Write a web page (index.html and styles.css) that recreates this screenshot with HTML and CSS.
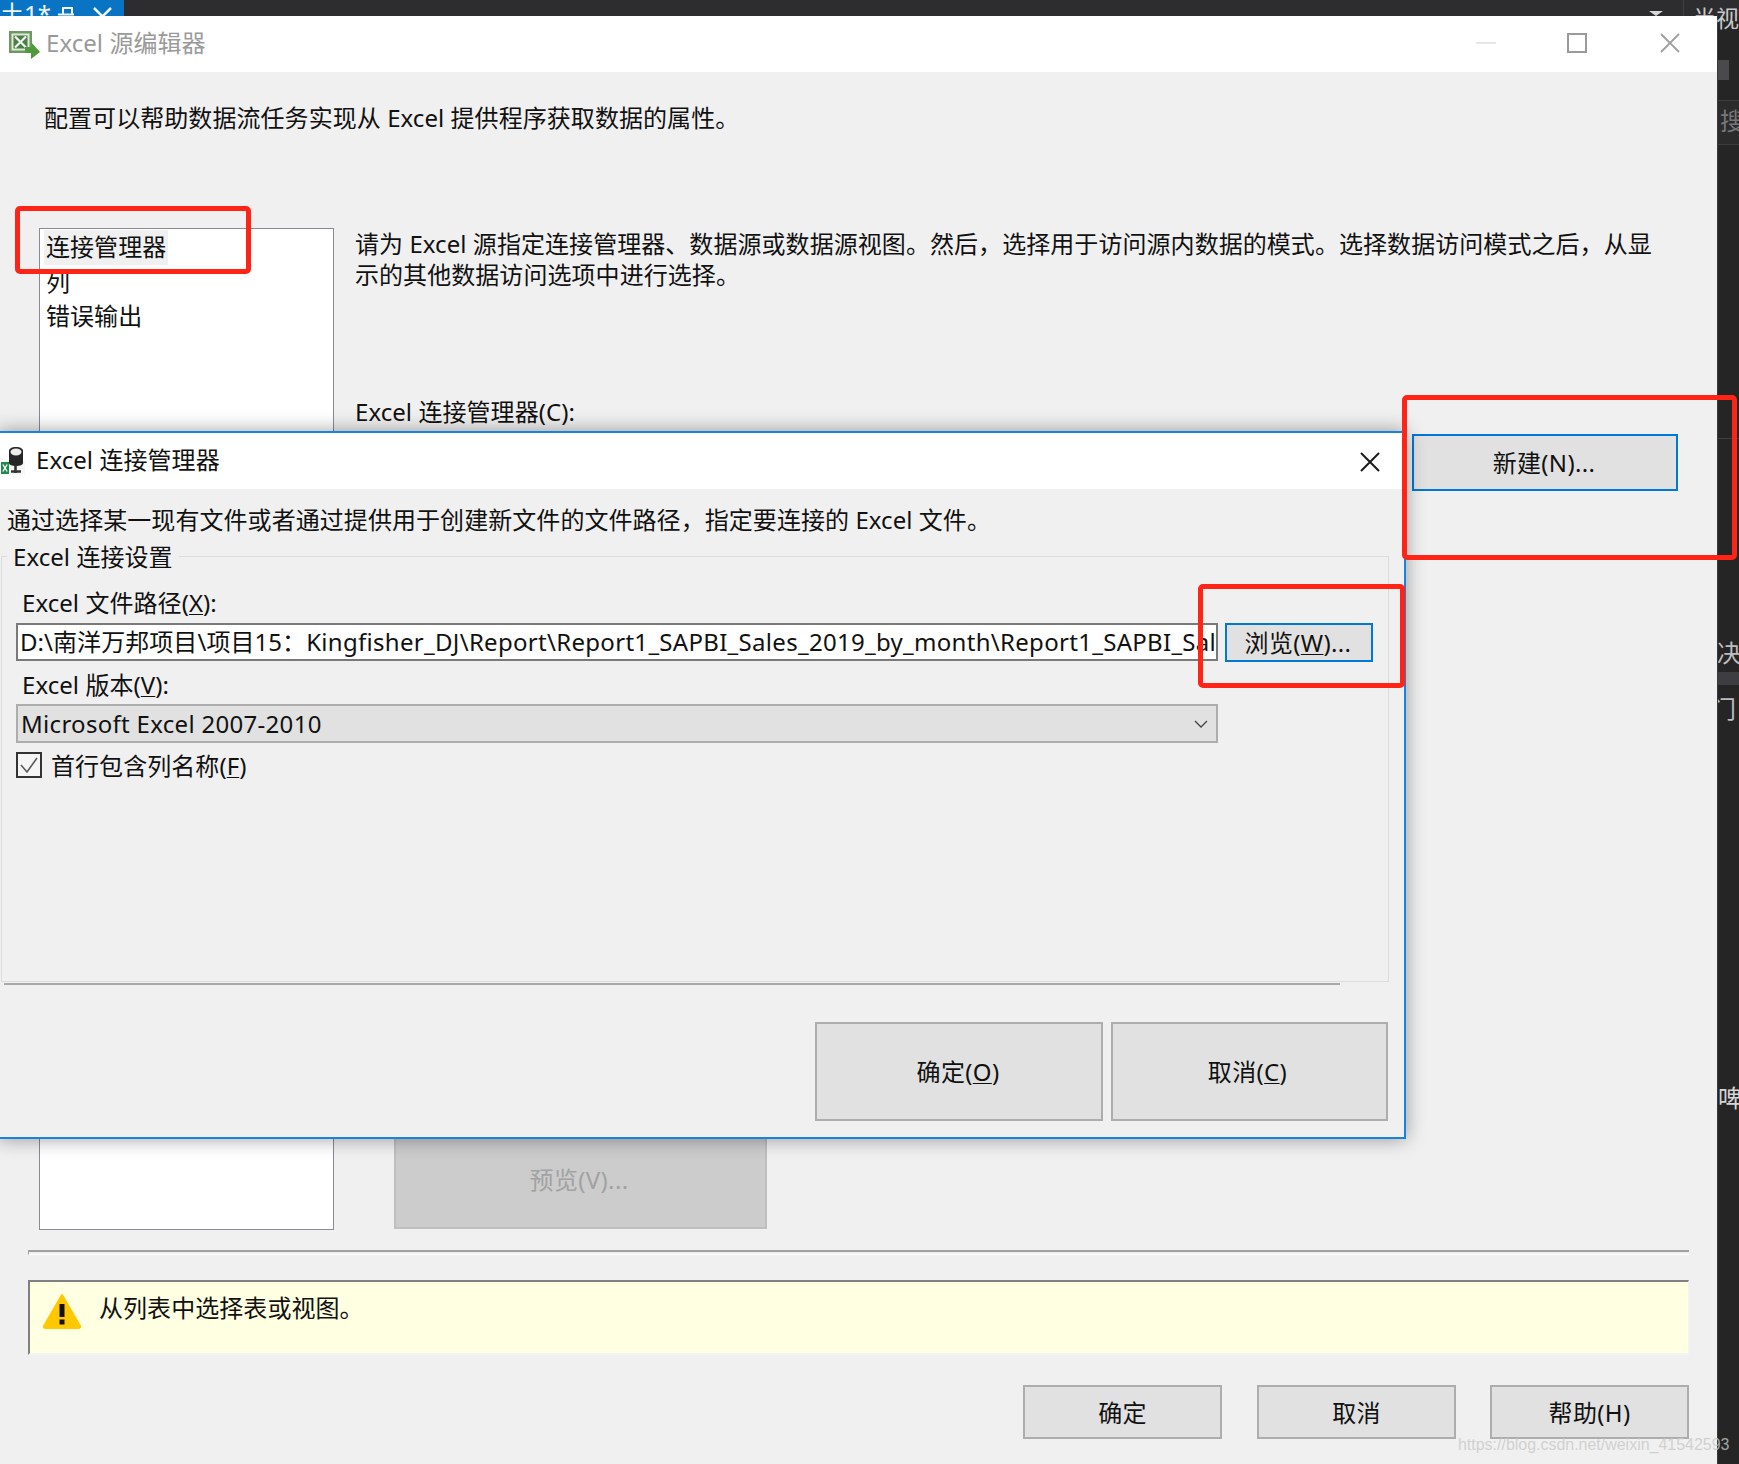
FILE: index.html
```html
<!DOCTYPE html>
<html lang="zh-CN">
<head>
<meta charset="utf-8">
<title>Excel 源编辑器</title>
<link rel="stylesheet" href="styles.css">
</head>
<body>
<div class="desktop">
  <header class="topbar">
    <div class="doc-tab">
      <span class="tab-name">土1*</span>
      <svg class="tab-pin" viewBox="0 0 16 9" aria-hidden="true"><path d="M0 7.500h16M5 7V1h9v6" stroke="#eef5fb" stroke-width="2" fill="none"/></svg>
      <svg class="tab-x" viewBox="0 0 19 19" aria-hidden="true"><path d="M1 1l17 17M18 1L1 18" stroke="#eef5fb" stroke-width="2.500" fill="none"/></svg>
    </div>
    <div class="top-tools"><span class="top-arrow"></span><span class="top-view">半视</span></div>
  </header>
  <div class="workspace">
    <main class="window">
      <div class="titlebar">
        <svg class="title-icon" viewBox="0 0 31 28" aria-hidden="true">
          <rect x="0" y="0" width="23" height="22" fill="#6d9a62"/>
          <rect x="2.500" y="2.500" width="18" height="17" fill="#dfe9d9"/>
          <rect x="4.500" y="4.500" width="14" height="13" fill="#4b7f45"/>
          <path d="M6 5.500l11 11M17 5.500L6 16.500" stroke="#f1f6ee" stroke-width="2.200" fill="none"/>
          <path d="M16 16h6v-5l9 10-9 7v-6h-6z" fill="#509a3d"/>
        </svg>
        <span class="title-text">Excel 源编辑器</span>
        <div class="win-controls">
          <svg class="wc" viewBox="0 0 20 20"><path d="M0 10h20" stroke="#dedede" stroke-width="1.5"/></svg>
          <svg class="wc" viewBox="0 0 20 20"><rect x="1" y="1" width="18" height="18" fill="none" stroke="#9a9a9a" stroke-width="2"/></svg>
          <svg class="wc wc-close" viewBox="0 0 20 20"><path d="M1 1l18 18M19 1L1 19" stroke="#a0a0a0" stroke-width="1.8" fill="none"/></svg>
        </div>
      </div>
      <div class="win-body">
        <p class="intro">配置可以帮助数据流任务实现从 Excel 提供程序获取数据的属性。</p>
        <div class="content">
          <ul class="nav-list">
            <li class="nav-item selected">连接管理器</li>
            <li class="nav-item">列</li>
            <li class="nav-item">错误输出</li>
          </ul>
          <section class="detail">
            <p class="instruction">请为 Excel 源指定连接管理器、数据源或数据源视图。然后，选择用于访问源内数据的模式。选择数据访问模式之后，从显<br>示的其他数据访问选项中进行选择。</p>
            <p class="conn-label">Excel 连接管理器(C):</p>
            <div class="new-row"><button class="btn btn-focus btn-new">新建(N)...</button></div>
            <button class="btn btn-disabled btn-preview">预览(V)...</button>
          </section>
        </div>
        <div class="separator"></div>
        <div class="message">
          <svg class="warn-icon" viewBox="0 0 40 36" aria-hidden="true">
            <path d="M20 2L38 33a1.5 1.5 0 0 1-1.5 2h-33A1.5 1.5 0 0 1 2 33z" fill="#ffc800" stroke="#ffc800" stroke-width="2" stroke-linejoin="round"/>
            <rect x="17.5" y="11" width="5" height="13" fill="#111"/>
            <rect x="17.5" y="26.5" width="5" height="5" fill="#111"/>
          </svg>
          <span class="message-text">从列表中选择表或视图。</span>
        </div>
        <div class="footer">
          <button class="btn btn-foot">确定</button>
          <button class="btn btn-foot">取消</button>
          <button class="btn btn-foot btn-help">帮助(H)</button>
        </div>
      </div>
    </main>
    <aside class="side-panel">
      <div class="side-chip"></div>
      <div class="side-search"><span class="side-glyph">搜</span></div>
      <div class="side-rule"></div>
      <div class="side-text first">决</div>
      <div class="side-band"></div>
      <div class="side-text second">门</div>
      <div class="side-text third">啤</div>
    </aside>
  </div>

  <section class="dialog">
    <div class="dlg-title">
      <svg class="dlg-icon" viewBox="0 0 24 28" aria-hidden="true">
        <rect x="0" y="14" width="24" height="14" fill="#f7f7f7"/>
        <path d="M8 4c0-2.500 3-4 7-4s7 1.500 7 4v12c0 1.800-3 3-7 3s-7-1.200-7-3z" fill="#262626"/>
        <ellipse cx="15" cy="5" rx="5.500" ry="3.400" fill="#ededed"/>
        <path d="M14.500 18v8M10 24.500h10" stroke="#333" stroke-width="2.600"/>
        <rect x="0" y="15" width="8" height="12" fill="#1f8a4c"/>
        <path d="M1.800 17.500l4.400 7M6.200 17.500l-4.400 7" stroke="#fff" stroke-width="1.400"/>
      </svg>
      <span class="dlg-title-text">Excel 连接管理器</span>
      <svg class="dlg-close" viewBox="0 0 20 20"><path d="M1 1l18 18M19 1L1 19" stroke="#1a1a1a" stroke-width="2" fill="none"/></svg>
    </div>
    <p class="dlg-intro">通过选择某一现有文件或者通过提供用于创建新文件的文件路径，指定要连接的 Excel 文件。</p>
    <fieldset class="group">
      <legend class="group-title">Excel 连接设置</legend>
      <div class="field-label path-label">Excel 文件路径(<u>X</u>):</div>
      <div class="path-row">
        <div class="path-input">D:\南洋万邦项目\项目15：<span class="path-latin">Kingfisher_DJ\Report\Report1_SAPBI_Sales_2019_by_month\Report1_SAPBI_Sal</span></div>
        <button class="btn btn-focus btn-browse">浏览(<u>W</u>)...</button>
      </div>
      <div class="field-label version-label">Excel 版本(<u>V</u>):</div>
      <div class="select">
        <span class="select-value">Microsoft Excel 2007-2010</span>
        <svg class="chevron" viewBox="0 0 14 8"><path d="M1 1l6 6 6-6" stroke="#444" stroke-width="1.300" fill="none"/></svg>
      </div>
      <label class="check-row">
        <svg class="checkbox" viewBox="0 0 26 26"><rect x="1" y="1" width="24" height="24" fill="#f5f5f5" stroke="#333" stroke-width="2"/><path d="M5 13l6 7L21 6" stroke="#5a5a5a" stroke-width="1.600" fill="none"/></svg>
        <span>首行包含列名称(<u>F</u>)</span>
      </label>
    </fieldset>
    <div class="dlg-rule"></div>
    <div class="dlg-actions">
      <button class="btn btn-ok">确定(<u>O</u>)</button>
      <button class="btn btn-cancel">取消(<u>C</u>)</button>
    </div>
  </section>

  <div class="mark mark-nav"></div>
  <div class="mark mark-new"></div>
  <div class="mark mark-browse"></div>
  <div class="watermark">https://blog.csdn.net/weixin_41542593</div>
</div>
</body>
</html>
```
FILE: styles.css
```css
* { box-sizing: border-box; }
html, body { margin: 0; padding: 0; }
body {
  width: 1739px;
  height: 1464px;
  overflow: hidden;
  background: #252526;
  font-family: "Noto Sans", "Noto Sans CJK SC", sans-serif;
  font-size: 24px;
  line-height: 31px;
  letter-spacing: .06px;
  color: #111;
}
p { margin: 0; }
u { text-underline-offset: 2px; text-decoration-thickness: 1px; }

.desktop { position: relative; width: 1739px; height: 1464px; overflow: hidden; }

/* top IDE strip */
.topbar {
  position: relative;
  z-index: 1;
  display: flex;
  justify-content: space-between;
  height: 16px;
  background: #2d2d30;
}
.doc-tab {
  display: flex;
  width: 124px;
  height: 16px;
  background: #0a74c4;
  color: #eef5fb;
  font-size: 24px;
  line-height: 26px;
  white-space: nowrap;
  overflow: hidden;
}
.tab-name { flex: none; width: 58px; margin-top: 1px; }
.tab-pin { flex: none; width: 16px; height: 9px; margin: 7px 0 0 0; }
.tab-x { flex: none; width: 19px; height: 19px; margin: 7px 0 0 19px; }
.top-tools { display: flex; align-items: flex-start; }
.top-arrow {
  width: 0;
  height: 0;
  margin: 11px 20px 0 0;
  border-left: 7px solid transparent;
  border-right: 7px solid transparent;
  border-top: 5px solid #d8d8d8;
}
.top-view {
  width: 56px;
  height: 16px;
  padding-left: 9px;
  border-left: 1px solid #3f3f46;
  color: #c8c8c8;
  font-size: 23px;
  line-height: 36px;
  white-space: nowrap;
}

.workspace { display: flex; height: 1448px; }

/* back window */
.window {
  position: relative;
  z-index: 2;
  display: flex;
  flex-direction: column;
  width: 1717px;
  background: #f0f0f0;
}
.titlebar {
  display: flex;
  align-items: center;
  height: 56px;
  flex: none;
  padding-left: 9px;
  background: #fff;
}
.title-icon { width: 31px; height: 28px; margin-top: 1px; }
.title-text { margin-left: 6px; margin-top: -2px; color: #9a9a9a; line-height: 52px; }
.win-controls { display: flex; gap: 71px; margin: -2px 0 0 auto; padding-right: 37px; }
.wc { width: 20px; height: 20px; }
.wc-close { margin-left: 2px; }

.win-body { display: flex; flex-direction: column; flex: 1; }
.intro { height: 31px; margin: 30px 0 0 44px; white-space: nowrap; }

.content {
  display: flex;
  height: 1002px;
  margin: 95px 0 0 39px;
}
.nav-list {
  width: 295px;
  margin: 0;
  padding: 1px 4px 0;
  list-style: none;
  background: #fff;
  border: 1px solid #8a8a94;
}
.nav-item { height: 34.500px; padding-left: 2px; line-height: 34px; }
.nav-item.selected { width: 124px; background: #f0f0f0; }

.detail {
  display: flex;
  flex-direction: column;
  align-items: flex-start;
  flex: 1;
  padding-left: 21px;
}
.instruction { white-space: nowrap; }
.conn-label { margin-top: 106px; }
.new-row { display: flex; justify-content: flex-end; align-self: stretch; margin-top: 7px; padding-right: 39px; }

.btn {
  display: flex;
  align-items: center;
  justify-content: center;
  padding: 0;
  background: #e1e1e1;
  border: 2px solid #adadad;
  border-radius: 0;
  color: #111;
  font: inherit;
  line-height: 31px;
  letter-spacing: .35px;
  white-space: nowrap;
}
.btn-focus { border-color: #0078d7; }
.btn-new { width: 266px; height: 57px; padding-right: 2px; }
.btn-disabled { background: #cccccc; border-color: #bfbfbf; color: #a2a2a2; }
.btn-preview { width: 373px; height: 94px; margin: auto 0 1px 39px; padding: 0 3px 6px 0; }

.separator {
  height: 5px;
  margin: 20px 28px 0;
  border-top: 2px solid #a0a0a0;
  border-left: 1px solid #a0a0a0;
  border-bottom: 1px solid #fff;
}
.message {
  display: flex;
  align-items: flex-start;
  height: 75px;
  margin: 25px 28px 0;
  background: #ffffe1;
  border-top: 2px solid #808080;
  border-left: 2px solid #808080;
  border-right: 1px solid #f4f4f4;
  border-bottom: 2px solid #f4f4f4;
}
.warn-icon { width: 40px; height: 36px; margin: 11px 0 0 12px; }
.message-text { margin: 10px 0 0 17px; }

.footer {
  display: flex;
  justify-content: flex-end;
  gap: 35px;
  margin: 30px 28px 0 0;
}
.btn-foot { width: 199px; height: 54px; }
.btn-help { margin-left: -1px; }

/* right side IDE panel */
.side-panel {
  display: flex;
  flex-direction: column;
  width: 22px;
  background: #252526;
  color: #bdbdbd;
  overflow: hidden;
  border-left: 1px solid #3a3a3c;
}
.side-chip { width: 11px; height: 20px; margin-top: 44px; background: #4a4a4c; }
.side-search {
  height: 45px;
  margin-top: 20px;
  background: #2b2b2c;
  border-top: 1px solid #3d3d40;
  border-bottom: 1px solid #3d3d40;
}
.side-glyph { display: block; margin-left: 2px; color: #777; line-height: 40px; white-space: nowrap; }
.side-rule { height: 1px; margin-top: 293px; background: #3f3f42; }
.side-text { height: 24px; line-height: 24px; white-space: nowrap; }
.side-text.first { margin-top: 202px; margin-left: -1px; }
.side-band { height: 13px; margin-top: 7px; background: #3e3e42; }
.side-text.second { margin-top: 12px; margin-left: -6px; }
.side-text.third { margin-top: 365px; color: #d6d6d6; }

/* front dialog (floats over the back window) */
.dialog {
  position: absolute;
  z-index: 3;
  left: -2px;
  top: 431px;
  width: 1408px;
  height: 708px;
  background: #f0f0f0;
  border: 2px solid #1883d7;
  box-shadow: 0 0 18px rgba(0, 0, 0, .38);
}
.dlg-title {
  display: flex;
  align-items: center;
  height: 56px;
  padding-left: 1px;
  background: #fff;
}
.dlg-icon { width: 24px; height: 28px; }
.dlg-title-text { margin-left: 11px; margin-top: -3px; }
.dlg-close { width: 20px; height: 20px; margin: 2px 24px 0 auto; }
.dlg-intro { margin: 15px 0 0 7px; white-space: nowrap; }
.group {
  display: block;
  width: 1388px;
  height: 441px;
  min-width: 0;
  margin: 6px 0 0 1px;
  padding: 0 14px;
  border: 1px solid #dcdcdc;
}
.group-title { margin-left: -9px; padding: 0 6px; line-height: 31px; white-space: nowrap; }
.field-label { padding-left: 6px; white-space: nowrap; }
.path-label { margin-top: 15px; }
.path-row { display: flex; gap: 7px; margin-top: 5px; }
.path-input {
  width: 1202px;
  height: 38px;
  padding-left: 2px;
  background: #fff;
  border: 2px solid #7a7a7a;
  line-height: 33px;
  white-space: nowrap;
  overflow: hidden;
}
.path-latin { letter-spacing: .3px; }
.btn-browse { width: 148px; height: 39px; padding-right: 2px; }
.version-label { margin-top: 7px; }
.select {
  display: flex;
  align-items: center;
  justify-content: space-between;
  width: 1202px;
  height: 39px;
  margin-top: 4px;
  padding: 0 8px 0 3px;
  background: #e1e1e1;
  border: 2px solid #adadad;
  white-space: nowrap;
}
.select-value { letter-spacing: .3px; }
.chevron { width: 14px; height: 8px; }
.check-row { display: flex; align-items: center; gap: 9px; height: 26px; margin-top: 9px; white-space: nowrap; }
.checkbox { width: 26px; height: 26px; flex: none; }
.dlg-rule {
  width: 1336px;
  height: 2px;
  margin: 1px 0 0 4px;
  background: #a8a8a8;
}
.dlg-actions { display: flex; justify-content: flex-end; gap: 8px; margin-top: 37px; padding-right: 16px; }
.btn-ok { width: 288px; height: 99px; padding-right: 2px; }
.btn-cancel { width: 277px; height: 99px; padding-right: 4px; }

/* red annotation rectangles drawn over the screenshot */
.mark {
  position: absolute;
  z-index: 4;
  border: 5px solid #ff2416;
  border-radius: 5px;
}
.mark-nav { left: 15px; top: 206px; width: 236px; height: 68px; }
.mark-new { left: 1402px; top: 395px; width: 335px; height: 165px; }
.mark-browse { left: 1198px; top: 584px; width: 207px; height: 104px; }

.watermark {
  position: absolute;
  z-index: 5;
  left: 1458px;
  top: 1435px;
  color: rgba(200, 200, 200, .8);
  font-family: "Liberation Sans", sans-serif;
  font-size: 15.960px;
  line-height: 20px;
  letter-spacing: 0;
  white-space: nowrap;
}
```
